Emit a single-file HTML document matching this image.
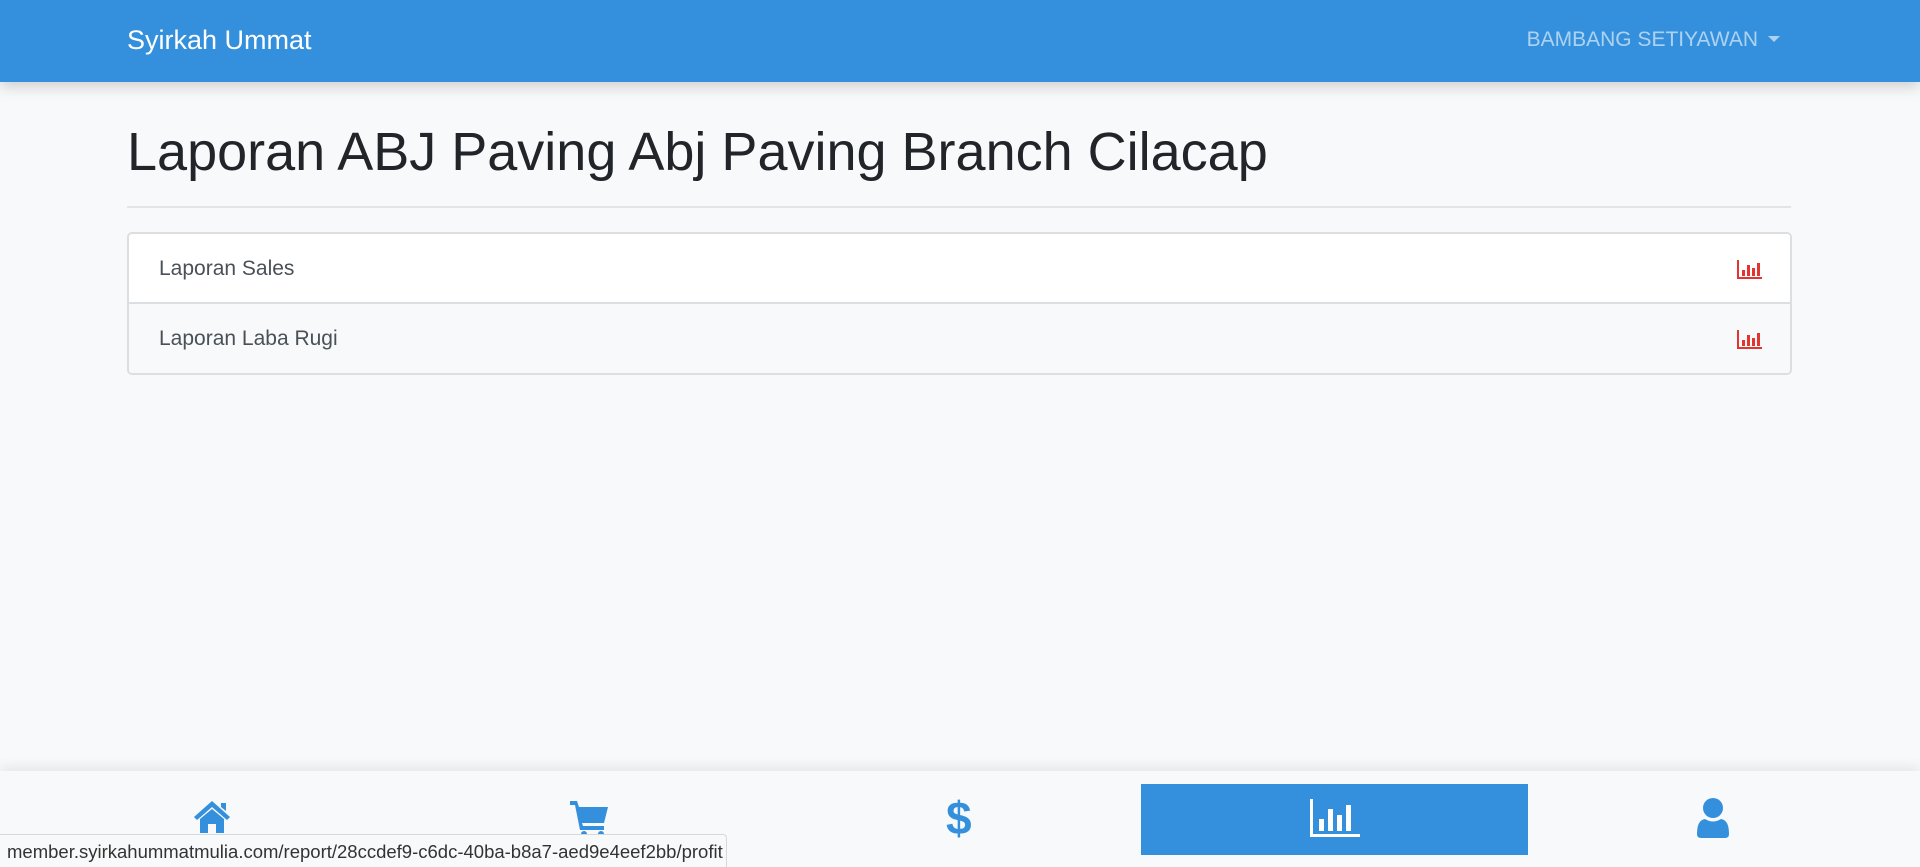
<!DOCTYPE html>
<html><head><meta charset="utf-8"><style>
*{box-sizing:border-box;margin:0;padding:0}
body{width:1920px;height:867px;overflow:hidden;background:#f8f9fa;font-family:"Liberation Sans",sans-serif;position:relative;color:#212529}
.nav{position:absolute;left:0;top:0;width:1920px;height:82px;background:#3490dc;box-shadow:0 4px 14px rgba(0,0,0,.18)}
.brand{position:absolute;left:127px;top:25px;color:#fff;font-size:27px}
.user{position:absolute;right:140px;top:28px;color:rgba(255,255,255,.6);font-size:21px}
.user:after{content:"";display:inline-block;margin-left:10px;vertical-align:4px;border-top:6px solid rgba(255,255,255,.6);border-left:6px solid transparent;border-right:6px solid transparent}
h1{position:absolute;left:127px;top:121px;font-weight:400;font-size:54px;color:#212529}
.hr{position:absolute;left:127px;width:1664px;top:206px;border-top:2px solid #e2e4e6}
.lg{position:absolute;left:127px;top:232px;width:1665px;height:143px;border:2px solid #dcdfe2;border-radius:5px;overflow:hidden}
.it{height:70px;position:relative;font-size:21px;color:#495057;padding:23px 0 0 30px}
.it1{background:#fff;border-bottom:2px solid #dcdfe2}
.it2{background:#f8f9fa}
.it svg{position:absolute;right:28px;top:26px}
.bn{position:absolute;left:0;top:771px;width:1920px;height:96px;background:#f8f9fa;box-shadow:0 -4px 12px rgba(0,0,0,.08)}
.act{position:absolute;left:1141px;top:13px;width:387px;height:71px;background:#3490dc}
.ic{position:absolute}
.st{position:absolute;left:0;top:834px;width:727px;height:33px;background:#f8f9fa;border:1px solid #d6d8db;border-left:0;border-bottom:0;border-radius:0 4px 0 0;font-size:18.5px;color:#333;padding:6px 0 0 7px;white-space:nowrap}
</style></head><body>
<div class="nav"><div class="brand">Syirkah Ummat</div><div class="user">BAMBANG SETIYAWAN</div></div>
<h1>Laporan ABJ Paving Abj Paving Branch Cilacap</h1>
<div class="hr"></div>
<div class="lg">
<div class="it it1">Laporan Sales<svg width="25" height="19" viewBox="0 0 25 19"><g fill="#e3342f"><rect x="0" y="0" width="2" height="19"/><rect x="0" y="17" width="25" height="2"/><rect x="5" y="10" width="3" height="6"/><rect x="10" y="5" width="3" height="11"/><rect x="15" y="8" width="3" height="8"/><rect x="20" y="3" width="3" height="13"/></g></svg></div>
<div class="it it2">Laporan Laba Rugi<svg width="25" height="19" viewBox="0 0 25 19"><g fill="#e3342f"><rect x="0" y="0" width="2" height="19"/><rect x="0" y="17" width="25" height="2"/><rect x="5" y="10" width="3" height="6"/><rect x="10" y="5" width="3" height="11"/><rect x="15" y="8" width="3" height="8"/><rect x="20" y="3" width="3" height="13"/></g></svg></div>
</div>
<div class="bn">
<div class="act"></div>
<svg class="ic" style="left:192px;top:28px" width="40" height="36" viewBox="0 0 40 36"><path d="M20 2 L38 18 L35 21 L20 8 L5 21 L2 18 Z M8 20 L20 10 L32 20 V34 H24 V25 H16 V34 H8 Z M29 4 H34 V12 L29 8 Z" fill="#3490dc"/></svg>
<svg class="ic" style="left:570px;top:28px" width="40" height="38" viewBox="0 0 40 38"><path d="M0 2 H7 L9 8 H38 L34 24 H12 L13 27 H34 V31 H10 L5 6 H0 Z" fill="#3490dc"/><circle cx="14" cy="35" r="3" fill="#3490dc"/><circle cx="31" cy="35" r="3" fill="#3490dc"/></svg>
<div class="ic" style="left:946px;top:20px;font-size:46px;font-weight:bold;color:#3490dc">$</div>
<svg class="ic" style="left:1310px;top:28px" width="50" height="38" viewBox="0 0 50 38"><g fill="#fff"><rect x="0" y="0" width="3" height="38"/><rect x="0" y="35" width="50" height="3"/><rect x="9" y="20" width="5" height="12"/><rect x="18" y="10" width="5" height="22"/><rect x="27" y="16" width="5" height="16"/><rect x="36" y="6" width="5" height="26"/></g></svg>
<svg class="ic" style="left:1697px;top:27px" width="32" height="40" viewBox="0 0 32 40"><circle cx="16" cy="10" r="10" fill="#3490dc"/><path d="M0 36 Q0 22 8 21 Q16 26 24 21 Q32 22 32 36 Q32 40 28 40 H4 Q0 40 0 36 Z" fill="#3490dc"/></svg>
</div>
<div class="st">member.syirkahummatmulia.com/report/28ccdef9-c6dc-40ba-b8a7-aed9e4eef2bb/profit</div>
</body></html>
